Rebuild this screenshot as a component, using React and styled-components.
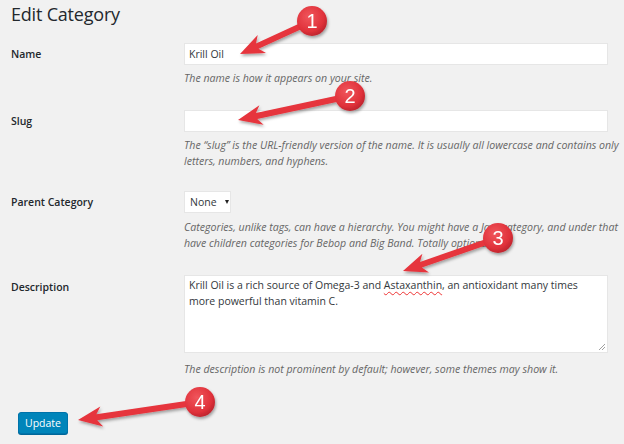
import React from "react";
import styled, { createGlobalStyle } from "styled-components";

const FONT = `"Open Sans", "Noto Sans", sans-serif`;

const Global = createGlobalStyle`
  html, body { margin: 0; padding: 0; background: #f1f1f1; overflow: hidden; }
  body { font-family: ${FONT}; color: #23282d; }
`;

const Page = styled.div`
  position: relative;
  width: 624px;
  height: 444px;
  overflow: hidden;
  background: #f1f1f1;
`;

const Wrap = styled.div`
  width: 760px;
  padding: 0 0 0 11px;
`;

const Title = styled.h1`
  margin: 0;
  padding-top: 1px;
  font-size: 18px;
  letter-spacing: -0.2px;
  font-weight: 400;
  line-height: 26px;
  color: #23282d;
`;

const Form = styled.div`
  display: flex;
  flex-direction: column;
  margin-top: 16px;
`;

const Row = styled.div`
  display: grid;
  grid-template-columns: 173px 450px;
  padding-bottom: ${(p) => p.$gap ?? 24}px;
`;

const Label = styled.label`
  font-size: 10.5px;
  font-weight: 600;
  line-height: 20px;
  padding-top: ${(p) => p.$top ?? 1}px;
  color: #23282d;
`;

const Field = styled.div`
  display: flex;
  flex-direction: column;
  align-items: flex-start;
`;

const Input = styled.div`
  box-sizing: border-box;
  width: 424px;
  height: 22px;
  background: #fff;
  border: 1px solid #e6e6e6;
  padding: 0 4px;
  font-size: 10.5px;
  line-height: 20px;
  color: #32373c;
`;

const Select = styled.div`
  box-sizing: border-box;
  height: 22px;
  width: 47px;
  background: #fff;
  border: 1px solid #e6e6e6;
  padding: 0 0 0 5px;
  font-size: 10.5px;
  line-height: 20px;
  color: #32373c;
  display: flex;
  align-items: center;
  gap: 8px;
  &::after {
    content: "";
    width: 0;
    height: 0;
    border-left: 2.5px solid transparent;
    border-right: 2.5px solid transparent;
    border-top: 4px solid #222;
  }
`;

const TextArea = styled.div`
  position: relative;
  box-sizing: border-box;
  width: 424px;
  height: 78px;
  background: #fff;
  border: 1px solid #e6e6e6;
  padding: 1px 20px 0 4px;
  font-size: 10.5px;
  line-height: 16px;
  color: #32373c;
`;

const Misspelled = styled.span`
  text-decoration: underline wavy #e33;
  text-decoration-thickness: 1px;
  text-underline-offset: 2px;
`;

const Grip = styled.svg`
  position: absolute;
  right: 1px;
  bottom: 1px;
`;

const Desc = styled.p`
  margin: ${(p) => p.$top ?? 5}px 0 0 0;
  font-size: 10.6px;
  font-style: italic;
  line-height: 16px;
  color: #666;
`;

const Button = styled.button`
  margin: 11px 0 0 7px;
  box-sizing: border-box;
  width: 50px;
  height: 22px;
  padding: 0;
  background: #0085ba;
  border: 1px solid #0073aa;
  border-radius: 3px;
  box-shadow: 0 1px 0 #006799;
  color: #fff;
  font-family: ${FONT};
  font-size: 10.5px;
  line-height: 20px;
`;

const Overlay = styled.svg`
  position: absolute;
  left: 0;
  top: 0;
  pointer-events: none;
`;

function arrowPoints(sx, sy, tx, ty) {
  const dx = sx - tx;
  const dy = sy - ty;
  const len = Math.hypot(dx, dy);
  const ux = dx / len;
  const uy = dy / len;
  const nx = -uy;
  const ny = ux;
  const L = 24;
  const W = 10;
  const w = 3;
  const bx = tx + ux * L;
  const by = ty + uy * L;
  const nb = tx + ux * (L - 5);
  const nbY = ty + uy * (L - 5);
  const pts = [
    [tx, ty],
    [bx + nx * W, by + ny * W],
    [nb + nx * w, nbY + ny * w],
    [sx + nx * w, sy + ny * w],
    [sx - nx * w, sy - ny * w],
    [nb - nx * w, nbY - ny * w],
    [bx - nx * W, by - ny * W],
  ];
  return pts.map((p) => p.map((v) => v.toFixed(1)).join(",")).join(" ");
}

const callouts = [
  { n: 1, cx: 312, cy: 21, tx: 240, ty: 54 },
  { n: 2, cx: 350, cy: 96, tx: 238, ty: 120 },
  { n: 3, cx: 498, cy: 238, tx: 403, ty: 271 },
  { n: 4, cx: 200, cy: 402, tx: 78, ty: 420 },
];

function Annotations() {
  return (
    <Overlay width="624" height="444" viewBox="0 0 624 444">
      <defs>
        <radialGradient id="ball" cx="40%" cy="35%" r="70%">
          <stop offset="0%" stopColor="#f0565c" />
          <stop offset="70%" stopColor="#e0313a" />
          <stop offset="100%" stopColor="#b8232b" />
        </radialGradient>
        <filter id="shadow" x="-20%" y="-20%" width="140%" height="140%">
          <feDropShadow dx="1" dy="2" stdDeviation="1.5" floodColor="#000" floodOpacity="0.35" />
        </filter>
      </defs>
      {callouts.map((c) => (
        <g key={c.n} filter="url(#shadow)">
          <polygon points={arrowPoints(c.cx, c.cy, c.tx, c.ty)} fill="#e6343c" />
          <circle cx={c.cx} cy={c.cy} r="15" fill="url(#ball)" />
          <text
            x={c.cx}
            y={c.cy + 7}
            textAnchor="middle"
            fontFamily='"Liberation Sans", Arial, sans-serif'
            fontSize="20"
            fill="#fff"
          >
            {c.n}
          </text>
        </g>
      ))}
    </Overlay>
  );
}

export default function App() {
  return (
    <Page>
      <Global />
      <Wrap>
        <Title>Edit Category</Title>
        <Form>
          <Row>
            <Label>Name</Label>
            <Field>
              <Input>Krill Oil</Input>
              <Desc>The name is how it appears on your site.</Desc>
            </Field>
          </Row>
          <Row $gap={22}>
            <Label>Slug</Label>
            <Field>
              <Input />
              <Desc>
                The “slug” is the URL-friendly version of the name. It is usually all lowercase and contains only letters, numbers, and hyphens.
              </Desc>
            </Field>
          </Row>
          <Row>
            <Label>Parent Category</Label>
            <Field>
              <Select>None</Select>
              <Desc $top={6}>
                Categories, unlike tags, can have a hierarchy. You might have a Jazz category, and under that have children categories for Bebop and Big Band. Totally optional.
              </Desc>
            </Field>
          </Row>
          <Row $gap={24}>
            <Label $top={2}>Description</Label>
            <Field>
              <TextArea>
                Krill Oil is a rich source of Omega-3 and <Misspelled>Astaxanthin</Misspelled>, an antioxidant many times more powerful than vitamin C.
                <Grip width="8" height="8" viewBox="0 0 8 8">
                  <path d="M7 1 L1 7 M7 4 L4 7" stroke="#888" strokeWidth="0.8" />
                </Grip>
              </TextArea>
              <Desc $top={8}>The description is not prominent by default; however, some themes may show it.</Desc>
            </Field>
          </Row>
        </Form>
        <Button>Update</Button>
      </Wrap>
      <Annotations />
    </Page>
  );
}
